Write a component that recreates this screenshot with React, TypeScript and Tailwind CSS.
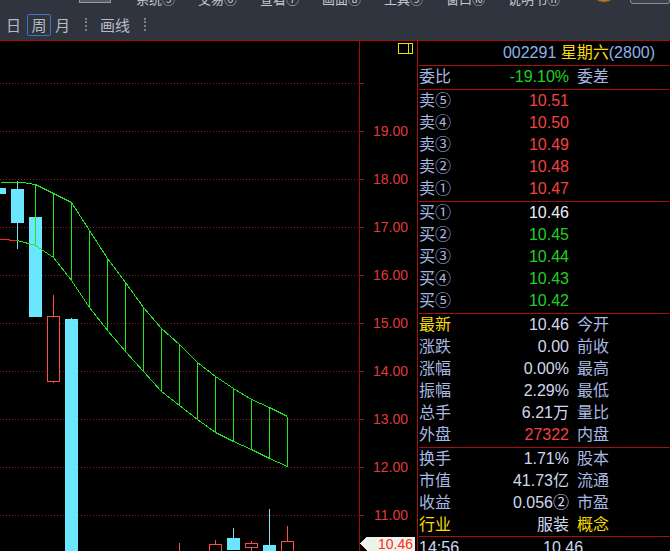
const upper: [number, number][] = [
  [0, 182], [22, 182], [35, 184], [53, 193], [71, 202], [89, 230], [107, 258], [125, 282],
  [143, 307], [161, 328], [179, 344], [197, 362], [215, 376], [233, 388], [251, 399], [269, 407], [287, 416],
];
const lower: [number, number][] = [
  [17, 240], [35, 245], [53, 257], [71, 280], [89, 307], [107, 330], [125, 351], [143, 371],
  [161, 391], [179, 405], [197, 419], [215, 432], [233, 441], [251, 449], [269, 458], [287, 466],
];

type Candle = { x: number; top: number; bot: number; wt?: number; wb?: number; up: boolean };

const candles: Candle[] = [
  { x: -7, top: 188, bot: 194, up: false },
  { x: 11, top: 189, bot: 223, wt: 181, wb: 249, up: false },
  { x: 29, top: 217, bot: 317, up: false },
  { x: 47, top: 316, bot: 382, wt: 295, wb: 383, up: true },
  { x: 65, top: 319, bot: 560, wt: 318, wb: 319, up: false },
  { x: 173, top: 560, bot: 570, wt: 543, wb: 560, up: true },
  { x: 209, top: 544, bot: 570, wt: 540, wb: 544, up: true },
  { x: 227, top: 538, bot: 550, wt: 528, wb: 538, up: false },
  { x: 245, top: 543, bot: 548, wt: 541, wb: 556, up: true },
  { x: 263, top: 545, bot: 570, wt: 509, wb: 545, up: false },
  { x: 281, top: 541, bot: 570, wt: 526, wb: 541, up: true },
];

const grid = [83, 131, 179, 227, 275, 323, 371, 419, 467, 515];
const labels = ["19.00", "18.00", "17.00", "16.00", "15.00", "14.00", "13.00", "12.00", "11.00"];

const menu = ["系统⑤", "交易⑥", "查看⑦", "画面⑧", "工具⑨", "窗口⑩", "说明书⑪"];

function Chart() {
  const pts = (a: [number, number][]) => a.map(([x, y]) => `${x + 0.5},${y + 0.5}`).join(" ");
  return (
    <svg width={417} height={510} viewBox="0 41 417 510" className="block shrink-0" shapeRendering="crispEdges">
      {grid.map((y) => (
        <g key={y}>
          <line x1={0} x2={358} y1={y + 0.5} y2={y + 0.5} stroke="#8e1616" strokeDasharray="1 2" />
          <line x1={360} x2={364} y1={y + 0.5} y2={y + 0.5} stroke="#a01010" />
        </g>
      ))}
      <line x1={359.5} x2={359.5} y1={41} y2={551} stroke="#9c0e0e" />
      {labels.map((t, i) => (
        <text
          key={t}
          x={408}
          y={grid[i + 1]}
          textAnchor="end"
          dominantBaseline="central"
          fontSize={14}
          fill="#e03a3a"
          fontFamily="Liberation Sans, sans-serif"
        >
          {t}
        </text>
      ))}
      {/* yellow window icon */}
      <rect x={398.5} y={43.5} width={14} height={10} fill="none" stroke="#f0e000" />
      <line x1={408.5} x2={408.5} y1={43} y2={54} stroke="#f0e000" />

      {candles.map((c, i) => (
        <g key={i}>
          {c.wt !== undefined && (
            <line
              x1={c.x + 6.5}
              x2={c.x + 6.5}
              y1={c.wt}
              y2={c.wb}
              stroke={c.up ? "#ff4a4a" : "#7edcf2"}
            />
          )}
          {c.up ? (
            <rect x={c.x + 0.5} y={c.top + 0.5} width={12} height={c.bot - c.top - 1} fill="#000" stroke="#ff4a4a" />
          ) : (
            <rect x={c.x} y={c.top} width={13} height={c.bot - c.top} fill="#6ae6fe" />
          )}
        </g>
      ))}

      {/* red average stub */}
      <polyline points="0,239.5 9,239.5 9,240.5 17,240.5" fill="none" stroke="#ff2020" />

      {/* green channel */}
      <polyline points={pts(upper)} fill="none" stroke="#22e622" />
      <polyline points={pts(lower)} fill="none" stroke="#22e622" />
      {lower.slice(1).map(([x, y]) => {
        const u = upper.find((p) => p[0] === x);
        return <line key={x} x1={x + 0.5} x2={x + 0.5} y1={(u ? u[1] : y) + 0.5} y2={y + 0.5} stroke="#22e622" />;
      })}

      {/* last price tag */}
      <polygon points="360,543.5 367,537 415,537 415,551 367,551" fill="#eef3e8" />
      <text
        x={413}
        y={544}
        textAnchor="end"
        dominantBaseline="central"
        fontSize={14}
        fill="#ff2a2a"
        fontFamily="Liberation Sans, sans-serif"
      >
        10.46
      </text>
    </svg>
  );
}

function Row({
  label,
  value,
  extra,
  lc = "text-[#a8b8e0]",
  vc = "text-[#d0d8ee]",
  ec = "text-[#a8b8e0]",
}: {
  label: string;
  value?: string;
  extra?: string;
  lc?: string;
  vc?: string;
  ec?: string;
}) {
  return (
    <div className="flex h-[22px] items-center leading-[22px]">
      <span className={`w-[60px] ${lc}`}>{label}</span>
      <span className={`w-[90px] text-right ${vc}`}>{value}</span>
      <span className={`ml-[8px] ${ec}`}>{extra}</span>
    </div>
  );
}

export default function App() {
  const red = "text-[#f44242]";
  const green = "text-[#20d020]";
  const yellow = "text-[#f8dc00]";
  return (
    <div className="w-[670px] h-[551px] overflow-hidden bg-black flex flex-col text-[16px] font-['Liberation_Sans','Noto_Sans_CJK_SC',sans-serif]">
      {/* top bar */}
      <div className="h-[41px] shrink-0 bg-[#30343e] border-b border-[#a80e0e] flex flex-col">
        <div className="h-[9px] overflow-hidden flex items-start">
          <div className="ml-[79px] w-[38px] h-[3px] bg-[#595c62] border-x border-b border-[#9a9a9a]" />
          <div className="ml-[25px] flex">
            {menu.map((m) => (
              <div key={m} className="w-[62px] -mt-[8px] leading-[16px] text-[13px] text-[#c4c8d0] whitespace-nowrap">
                {m}
              </div>
            ))}
          </div>
          <div className="ml-[21px] -mt-[23px] w-[26px] h-[26px] shrink-0 rounded-full bg-[radial-gradient(circle_at_50%_40%,#e8c070,#8a5a20)] border border-[#5a3a10]" />
          <div className="ml-[13px] -mt-[2px] w-[40px] h-[6px] shrink-0 rounded-[3px] border border-[#8a8e96] bg-[#3c4049]" />
        </div>
        <div className="flex-1 flex items-center text-[15px] text-[#b8bcc6] font-['Noto_Sans_CJK_SC',sans-serif]">
          <span className="ml-[6px] w-[15px] leading-[20px]">日</span>
          <span className="ml-[6px] w-[24px] h-[22px] flex items-center justify-center rounded-[2px] border border-[#3d74c4] leading-[20px]">
            周
          </span>
          <span className="ml-[4px] w-[15px] leading-[20px]">月</span>
          <span className="ml-[15px] w-[2px] h-[13px] border-l-2 border-dotted border-[#7c8088]" />
          <span className="ml-[13px] leading-[20px]">画线</span>
          <span className="ml-[14px] w-[2px] h-[13px] border-l-2 border-dotted border-[#7c8088]" />
        </div>
      </div>

      {/* body */}
      <div className="flex flex-1 min-h-0">
        <Chart />
        <div className="flex-1 border-l border-[#a80e0e] pl-[1px] flex flex-col">
          <div className="h-[25px] shrink-0 border-b border-[#a80e0e] flex items-center justify-end pr-[15px] text-[#8cb2ea] whitespace-nowrap">
            002291&nbsp;<span className={yellow}>星期六</span>(2800)
          </div>
          <div className="h-[24px] shrink-0 border-b border-[#a80e0e]">
            <Row label="委比" value="-19.10%" extra="委差" vc={green} />
          </div>
          <div className="h-[112px] shrink-0 border-b border-[#a80e0e]">
            <Row label="卖⑤" value="10.51" vc={red} />
            <Row label="卖④" value="10.50" vc={red} />
            <Row label="卖③" value="10.49" vc={red} />
            <Row label="卖②" value="10.48" vc={red} />
            <Row label="卖①" value="10.47" vc={red} />
          </div>
          <div className="h-[112px] shrink-0 border-b border-[#a80e0e]">
            <Row label="买①" value="10.46" vc="text-[#e8eef8]" />
            <Row label="买②" value="10.45" vc={green} />
            <Row label="买③" value="10.44" vc={green} />
            <Row label="买④" value="10.43" vc={green} />
            <Row label="买⑤" value="10.42" vc={green} />
          </div>
          <div className="h-[134px] shrink-0 border-b border-[#a80e0e]">
            <Row label="最新" value="10.46" extra="今开" lc={yellow} />
            <Row label="涨跌" value="0.00" extra="前收" />
            <Row label="涨幅" value="0.00%" extra="最高" />
            <Row label="振幅" value="2.29%" extra="最低" />
            <Row label="总手" value="6.21万" extra="量比" />
            <Row label="外盘" value="27322" extra="内盘" vc={red} />
          </div>
          <div className="h-[89px] shrink-0 border-b border-[#a80e0e]">
            <Row label="换手" value="1.71%" extra="股本" />
            <Row label="市值" value="41.73亿" extra="流通" />
            <Row label="收益" value="0.056②" extra="市盈" />
            <Row label="行业" value="服装" extra="概念" lc={yellow} ec={yellow} />
          </div>
          <div className="flex h-[22px] items-center leading-[22px] text-[#d0d8ee]">
            <span className="w-[124px]">14:56</span>
            <span>10.46</span>
          </div>
        </div>
      </div>
    </div>
  );
}
